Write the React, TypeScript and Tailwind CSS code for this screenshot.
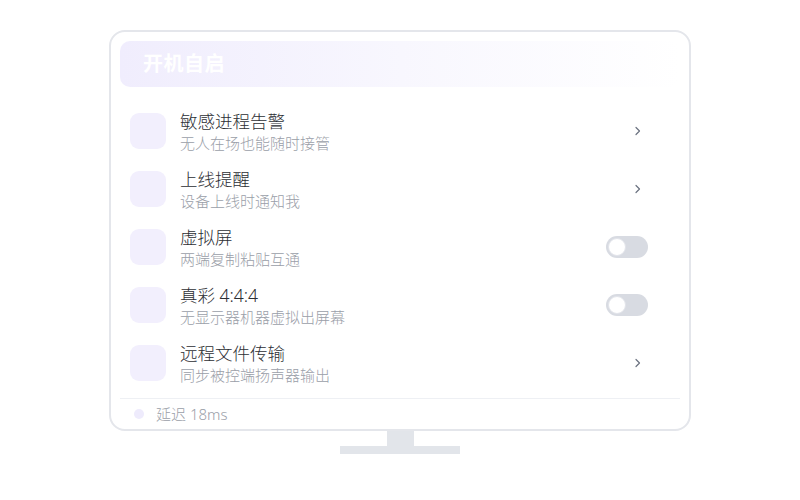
import type { ReactNode } from 'react';

const font = { fontFamily: '"Noto Sans", "Noto Sans CJK SC", sans-serif' };

type Item = {
  title: string;
  desc: string;
  kind: 'link' | 'toggle';
};

const items: Item[] = [
  { title: '敏感进程告警', desc: '无人在场也能随时接管', kind: 'link' },
  { title: '上线提醒', desc: '设备上线时通知我', kind: 'link' },
  { title: '虚拟屏', desc: '两端复制粘贴互通', kind: 'toggle' },
  { title: '真彩 4:4:4', desc: '无显示器机器虚拟出屏幕', kind: 'toggle' },
  { title: '远程文件传输', desc: '同步被控端扬声器输出', kind: 'link' },
];

function Chevron() {
  return (
    <svg width="8" height="10" viewBox="0 0 8 10" fill="none" className="mr-[6px]">
      <path d="M2 1.5L5.5 5L2 8.5" stroke="#6b7280" strokeWidth="1.2" strokeLinecap="round" strokeLinejoin="round" />
    </svg>
  );
}

function Toggle() {
  return (
    <div className="relative w-[42px] h-[22px] rounded-full bg-[#d8dbe2]">
      <div className="absolute left-[2px] top-[2px] w-[18px] h-[18px] rounded-full bg-white border border-[#e2e4ea]" />
    </div>
  );
}

function Row({ item }: { item: Item }): ReactNode {
  return (
    <div className="flex items-start h-[58px] px-[10px] shrink-0">
      <div className="mt-[11px] w-[36px] h-[36px] rounded-[9px] bg-[#f2effd] shrink-0" />
      <div className="ml-[14px] pt-[8px] flex-1 font-light">
        <div className="text-[17.5px] leading-[22px] text-[#2c2e33]">{item.title}</div>
        <div className="mt-[2px] text-[15px] leading-[18px] text-[#9a9ea8]">{item.desc}</div>
      </div>
      <div className="h-full flex items-center pr-[22px]">
        {item.kind === 'link' ? <Chevron /> : <Toggle />}
      </div>
    </div>
  );
}

export default function App() {
  return (
    <div className="w-[800px] h-[500px] bg-white flex flex-col items-center pt-[30px]" style={font}>
      <div className="w-[582px] h-[401px] shrink-0 rounded-[16px] border-2 border-[#e4e6eb] bg-white pt-[9px] px-[9px] flex flex-col">
        <div className="h-[46px] shrink-0 rounded-[10px] bg-gradient-to-r from-[#f0edfd] via-[#f8f7fe] to-white flex items-center pl-[23px]">
          <span className="text-[20px] font-bold text-white tracking-[0.5px]">开机自启</span>
        </div>
        <div className="mt-[15px] flex flex-col shrink-0">
          {items.map((it) => (
            <Row key={it.title} item={it} />
          ))}
        </div>
        <div className="mt-[6px] border-t border-[#eef0f4] flex items-center h-[31px] shrink-0 pl-[14px]">
          <div className="w-[10px] h-[10px] rounded-full bg-[#eeebfc]" />
          <span className="ml-[12px] text-[15px] font-light text-[#9a9ea8]">延迟 18ms</span>
        </div>
      </div>
      <div className="w-[27px] h-[15px] bg-[#e2e5ea]" />
      <div className="w-[120px] h-[8px] bg-[#e2e5ea]" />
    </div>
  );
}
